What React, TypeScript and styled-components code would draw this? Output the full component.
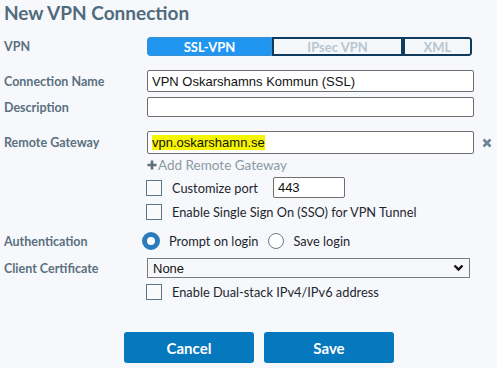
import * as React from "react";
import styled, { createGlobalStyle } from "styled-components";

const Global = createGlobalStyle`
  html, body {
    margin: 0;
    padding: 0;
    background: #f7f8fb;
  }
  body {
    font-family: Lato, "Liberation Sans", sans-serif;
  }
`;

const Page = styled.div`
  width: 497px;
  height: 368px;
  padding: 0 0 0 4px;
  box-sizing: border-box;
  overflow: hidden;
`;

const Title = styled.h1`
  margin: 0;
  padding-top: 1px;
  height: 28px;
  font-size: 19px;
  font-weight: 700;
  color: #4f6b7d;
  line-height: 24px;
`;

const Row = styled.div<{ $top: number; $h: number }>`
  display: grid;
  grid-template-columns: 143px 327px 1fr;
  align-items: center;
  margin-top: ${(p) => p.$top}px;
  height: ${(p) => p.$h}px;
`;

const Label = styled.div`
  font-size: 12.5px;
  font-weight: 700;
  color: #5a7080;
`;

const Segments = styled.div`
  display: flex;
  width: 325px;
  height: 19px;
  border-radius: 3px;
  overflow: hidden;
`;

const Segment = styled.div<{ $w: number; $active?: boolean }>`
  width: ${(p) => p.$w}px;
  box-sizing: border-box;
  display: flex;
  align-items: center;
  justify-content: center;
  font-size: 13px;
  font-weight: 700;
  background: ${(p) => (p.$active ? "#2196f0" : "#f5f8fb")};
  color: ${(p) => (p.$active ? "#ffffff" : "#b9c6d0")};
  border: ${(p) => (p.$active ? "1px solid #3a8fd0" : "2px solid #0f3b5f")};
  border-left-width: ${(p) => (p.$active ? 1 : 2)}px;
  &:last-child {
    border-radius: 0 3px 3px 0;
  }
  &:first-child {
    border-radius: 3px 0 0 3px;
  }
`;

const TextBox = styled.div<{ $w?: number; $h: number }>`
  width: ${(p) => (p.$w ? `${p.$w}px` : "327px")};
  height: ${(p) => p.$h}px;
  box-sizing: border-box;
  border: 1px solid #6f6f6f;
  border-radius: 2px;
  background: #ffffff;
  padding: 0 4px;
  display: flex;
  align-items: center;
  font-family: "Liberation Sans", Arial, sans-serif;
  font-size: 13px;
  color: #111;
`;

const Highlight = styled.span`
  background: #f5f500;
`;

const Remove = styled.div`
  padding-left: 8px;
  display: flex;
  align-items: center;
`;

const AddLink = styled.div`
  grid-column: 2;
  font-size: 13.5px;
  color: #8a9aa6;
  display: flex;
  align-items: center;
`;

const Plus = styled.svg`
  margin-right: 1px;
`;

const CheckLine = styled.div`
  grid-column: 2 / 4;
  display: flex;
  align-items: center;
  font-size: 12.8px;
  color: #1c2730;
`;

const Box = styled.span`
  width: 16px;
  height: 16px;
  box-sizing: border-box;
  border: 1px solid #5c7686;
  background: #f9fafc;
  margin: 0 10px 0 -1px;
  flex: none;
`;

const PortGap = styled.span`
  width: 15px;
`;

const Radio = styled.span<{ $on?: boolean }>`
  width: ${(p) => (p.$on ? 18 : 16)}px;
  height: ${(p) => (p.$on ? 18 : 16)}px;
  box-sizing: border-box;
  border-radius: 50%;
  border: ${(p) => (p.$on ? "5px solid #2b7cbd" : "1px solid #6b7b88")};
  background: #fff;
  margin-right: 9px;
  flex: none;
`;

const RadioGroup = styled.div`
  grid-column: 2 / 4;
  display: flex;
  align-items: center;
  margin-left: -5px;
  font-size: 12.8px;
  color: #1c2730;
`;

const RadioSpacer = styled.span`
  width: 10px;
`;

const Select = styled.div`
  width: 323px;
  height: 20px;
  box-sizing: border-box;
  border: 1px solid #7a7a7a;
  background: #f7f8fb;
  display: flex;
  align-items: center;
  justify-content: space-between;
  padding: 0 5px 0 5px;
  font-family: "Liberation Sans", Arial, sans-serif;
  font-size: 13px;
  color: #111;
`;

const Buttons = styled.div`
  display: flex;
  gap: 10px;
  margin: 32px 0 0 120px;
`;

const Button = styled.button`
  width: 130px;
  height: 31px;
  border: none;
  border-radius: 3px;
  background: #0678bd;
  color: #fff;
  font-family: Lato, "Liberation Sans", sans-serif;
  font-size: 15px;
  font-weight: 700;
  padding: 0;
`;

export default function App() {
  return (
    <Page>
      <Global />
      <Title>New VPN Connection</Title>
      <Row $top={8} $h={19}>
        <Label>VPN</Label>
        <Segments>
          <Segment $w={125} $active>
            SSL-VPN
          </Segment>
          <Segment $w={131}>IPsec VPN</Segment>
          <Segment $w={69}>XML</Segment>
        </Segments>
      </Row>
      <Row $top={14} $h={22}>
        <Label>Connection Name</Label>
        <TextBox $h={22}>VPN Oskarshamns Kommun (SSL)</TextBox>
      </Row>
      <Row $top={5} $h={20}>
        <Label>Description</Label>
        <TextBox $h={20} />
      </Row>
      <Row $top={14} $h={23}>
        <Label>Remote Gateway</Label>
        <TextBox $h={23}>
          <Highlight>vpn.oskarshamn.se</Highlight>
        </TextBox>
        <Remove>
          <svg width="10" height="10" viewBox="0 0 10 10">
            <path d="M1.5 1.5 L8.5 8.5 M8.5 1.5 L1.5 8.5" stroke="#6d8393" strokeWidth="2.6" strokeLinecap="butt" />
          </svg>
        </Remove>
      </Row>
      <Row $top={3} $h={16}>
        <AddLink>
          <Plus width="10" height="10" viewBox="0 0 10 10">
            <path d="M5 0.5 V9.5 M0.5 5 H9.5" stroke="#5b6f7e" strokeWidth="2.6" />
          </Plus>
          Add Remote Gateway
        </AddLink>
      </Row>
      <Row $top={4} $h={21}>
        <CheckLine>
          <Box />
          Customize port
          <PortGap />
          <TextBox $w={72} $h={21}>
            443
          </TextBox>
        </CheckLine>
      </Row>
      <Row $top={5} $h={17}>
        <CheckLine>
          <Box />
          Enable Single Sign On (SSO) for VPN Tunnel
        </CheckLine>
      </Row>
      <Row $top={12} $h={18}>
        <Label>Authentication</Label>
        <RadioGroup>
          <Radio $on />
          Prompt on login
          <RadioSpacer />
          <Radio />
          Save login
        </RadioGroup>
      </Row>
      <Row $top={8} $h={20}>
        <Label>Client Certificate</Label>
        <Select>
          None
          <svg width="11" height="8" viewBox="0 0 11 8">
            <path d="M1.5 1.5 L5.5 5.5 L9.5 1.5" stroke="#111" strokeWidth="2.4" fill="none" />
          </svg>
        </Select>
      </Row>
      <Row $top={6} $h={16}>
        <CheckLine>
          <Box />
          Enable Dual-stack IPv4/IPv6 address
        </CheckLine>
      </Row>
      <Buttons>
        <Button>Cancel</Button>
        <Button>Save</Button>
      </Buttons>
    </Page>
  );
}
